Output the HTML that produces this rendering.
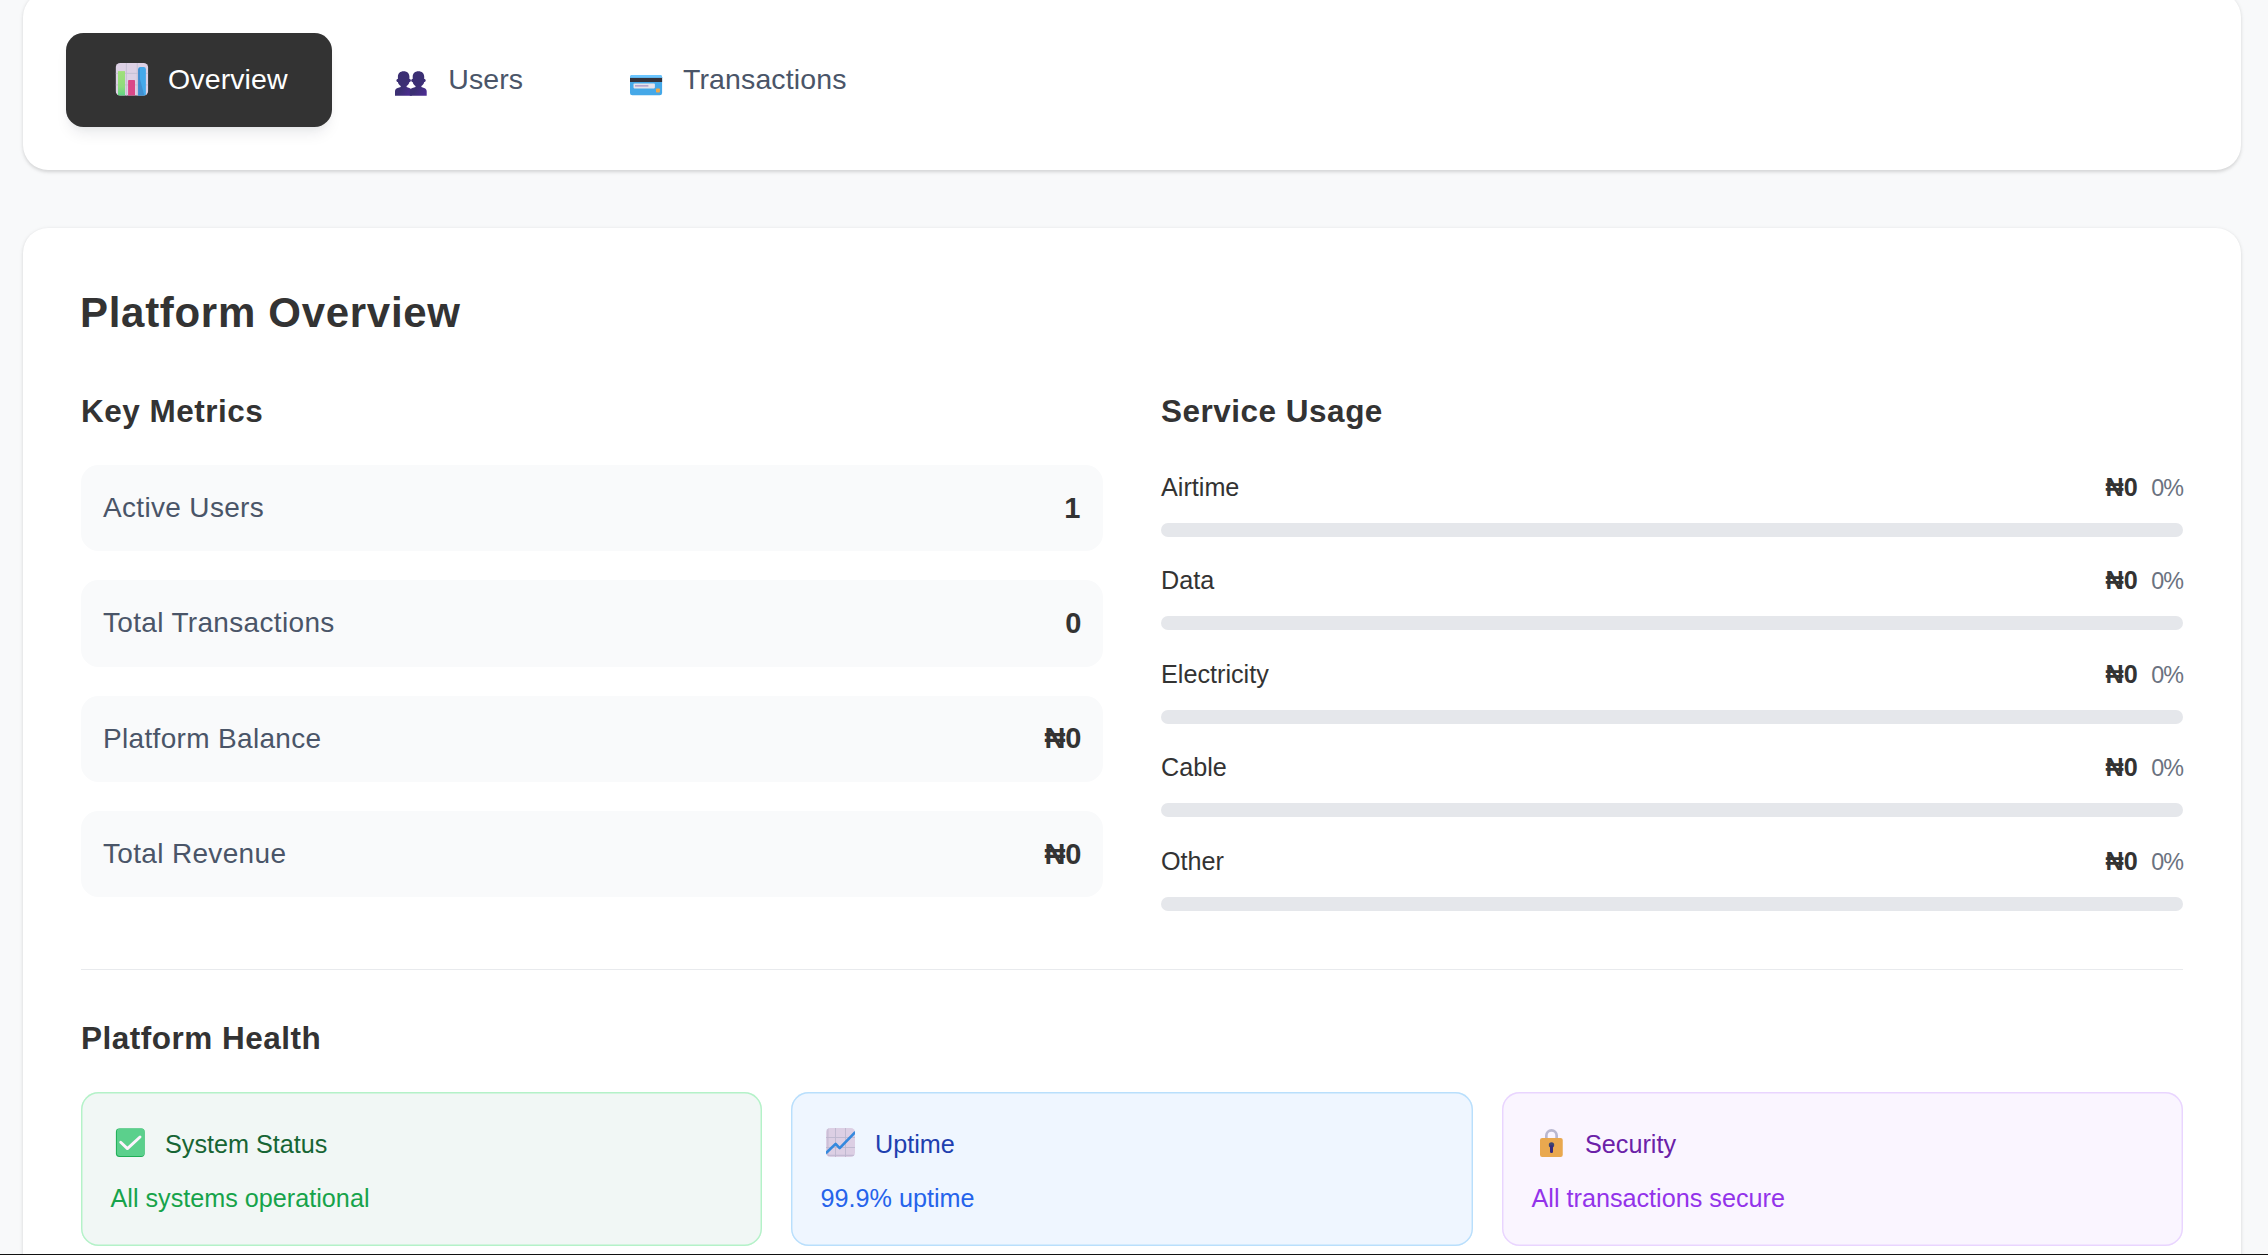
<!DOCTYPE html>
<html lang="en">
<head>
<meta charset="utf-8">
<title>Admin Dashboard - Platform Overview</title>
<style>
*{box-sizing:border-box;margin:0;padding:0}
html,body{width:2268px;height:1255px;overflow:hidden}
body{background:#f8f9fa;font-family:"Liberation Sans",Arial,Helvetica,sans-serif;color:#333;position:relative;-webkit-font-smoothing:antialiased}
.card{position:absolute;left:23px;width:2218px;background:#fff;border-radius:25px;box-shadow:0 1.5px 4.5px rgba(0,0,0,.10),0 1.5px 3px rgba(0,0,0,.06)}
/* ---------- tabs ---------- */
.tabs{top:-8px;height:178px}
.tabs ul{list-style:none;position:absolute;left:43px;top:41px;display:flex;height:94px}
.tab{display:flex;align-items:center;height:94px;border-radius:17.5px;font-size:28.5px;letter-spacing:.12px;color:#4a5568;white-space:nowrap;position:relative}
.tab svg{display:block;flex:none}
.tab span{display:block;line-height:93px;height:94px}
.tab.active{background:#333;color:#fff;box-shadow:0 10px 15px -4px rgba(15,23,42,.085),0 4px 7px -3px rgba(15,23,42,.05)}
/* ---------- main ---------- */
.main{top:228px;height:1100px}
h2{position:absolute;left:57px;top:56px;font-size:42px;letter-spacing:.7px;line-height:58px;font-weight:700;color:#333;white-space:nowrap}
h3{font-size:31.5px;letter-spacing:.5px;line-height:44px;position:relative;top:1px;font-weight:700;color:#333;white-space:nowrap}
.col{position:absolute;top:160px;width:1022px}
.metrics{left:58px}
.usage{left:1138px}
.mrow{height:86.2px;margin-bottom:29.13px;background:#f9fafb;border-radius:17.5px;padding:0 21.5px 0 22px;display:flex;justify-content:space-between;align-items:center;font-size:28px;letter-spacing:.33px;color:#4a5568}
.mrow b{font-size:29px;letter-spacing:0;color:#333;font-weight:700}
.metrics h3,.usage h3{margin-bottom:33px}
.srow{height:93.45px}
.srow .top{display:flex;justify-content:space-between;align-items:baseline;font-size:25.2px;color:#333;height:46px;line-height:44px}
.srow .top b{font-weight:700;font-size:25.2px;color:#333}
.srow .top i{font-style:normal;font-size:23.3px;letter-spacing:-.75px;color:#6b7280;margin-left:13.4px;margin-right:-.3px}
.bar{height:14px;border-radius:7px;background:#e5e7eb;margin-top:12px}
hr{position:absolute;left:58px;width:2102px;top:740.5px;border:0;height:1.5px;background:#e8eaed}
.health{position:absolute;left:58px;top:787px;width:2102px}
.hcards{display:flex;margin-top:33px}
.hc{flex:none;width:681px;height:153.5px;border-radius:17.5px;position:relative}
.hc.b{margin-left:29px;width:681.5px}.hc.p{margin-left:29.5px}
.hc .t{position:absolute;left:34px;top:36px;height:30px;display:flex;align-items:center;font-size:25.2px;line-height:30px;white-space:nowrap}
.hc .t svg{display:block;flex:none;margin-right:20px}
.hc .t span{position:relative;top:.5px}
.hc .s{position:absolute;left:29.5px;top:90.5px;font-size:25.2px;line-height:30px;white-space:nowrap}
.hc.g{background:#f1f7f5;box-shadow:inset 0 0 0 1.45px #b4f2c8}.hc.g .t{color:#166534}.hc.g .s{color:#16a34a}
.hc.b{background:#eff6ff;box-shadow:inset 0 0 0 1.45px #b9dffc}.hc.b .t{color:#1e40af}.hc.b .s{color:#2563eb}
.hc.p{background:#faf5ff;box-shadow:inset 0 0 0 1.45px #e9d5ff}.hc.p .t{color:#6b21a8}.hc.p .s{color:#9333ea}
.bottomline{position:absolute;left:0;top:1253.5px;width:2268px;height:2px;background:#111}
</style>
</head>
<body>

<nav class="card tabs">
  <ul>
    <li class="tab active" style="width:266px;padding-left:49px">
      <svg width="34" height="34" viewBox="0 0 34 34" style="margin-right:19px;position:relative;top:-1px">
        <defs><clipPath id="cpa"><rect x="0.15" y="0.4" width="32.5" height="32.7" rx="4.6"/></clipPath>
        <linearGradient id="gga" x1="0" y1="0" x2="0" y2="1"><stop offset="0" stop-color="#a0e07a"/><stop offset=".6" stop-color="#8fdc7c"/><stop offset="1" stop-color="#58d286"/></linearGradient></defs>
        <g transform="translate(.5 .5)" clip-path="url(#cpa)">
          <rect width="33" height="34" fill="#ddd1e5"/>
          <path d="M10.9 0V34M21.75 0V34M0 10.9H33M0 22.4H33" stroke="#c3bfd4" stroke-width=".9" fill="none"/>
          <rect x="2.5" y="8.6" width="7" height="26" fill="url(#gga)"/>
          <rect x="12.6" y="17.5" width="6.9" height="17" rx=".8" fill="#d94888"/>
          <rect x="22.7" y="4.6" width="7.7" height="30" rx="2.2" fill="#45a9ea"/>
          <path d="M22.7 7.5q0-2 1.6-2.6V34H22.7z" fill="#3f8acc"/>
          <path d="M24.3 16l4.8 18h-4.8z" fill="#3f8acc" opacity=".8"/>
        </g></svg>
      <span>Overview</span>
    </li>
    <li class="tab" style="margin-left:11px;width:224px;padding-left:52px">
      <svg width="32" height="26" viewBox="0 0 32 26" style="margin-right:21.2px;position:relative;top:4px">
        <defs><linearGradient id="ggu" x1="0" y1="0" x2="1" y2="1"><stop offset="0" stop-color="#3b2f73"/><stop offset=".55" stop-color="#3b2f73"/><stop offset="1" stop-color="#4f2c98"/></linearGradient></defs>
        <g fill="url(#ggu)">
          <path d="M8.65.2C12.2.2 14.4 2.4 14.4 5.6V8c.9 0 1.5.6 1.5 1.4s-.6 1.500-1.500 1.500C14.200 12.600 13 14 11.600 14.900V16L14.300 16.900C15.900 17.400 16.900 18.800 16.900 20.400V24.800H0V20.400C0 18.800 1 17.400 2.600 16.900L5.700 16V14.900C4.300 14 3.100 12.600 2.900 10.900c-.9 0-1.500-.7-1.500-1.500S2 8 2.900 8V5.600C2.900 2.400 5.100.2 8.650.2z"/>
          <path transform="translate(14.8 0)" d="M8.65.2C12.2.2 14.4 2.4 14.4 5.6V8c.9 0 1.5.6 1.5 1.4s-.6 1.500-1.500 1.500C14.200 12.600 13 14 11.600 14.900V16L14.300 16.900C15.900 17.400 16.900 18.800 16.900 20.400V24.800H0V20.400C0 18.800 1 17.400 2.600 16.900L5.700 16V14.900C4.300 14 3.100 12.600 2.900 10.900c-.9 0-1.500-.7-1.500-1.500S2 8 2.900 8V5.600C2.900 2.400 5.100.2 8.650.2z"/>
        </g></svg>
      <span>Users</span>
    </li>
    <li class="tab" style="margin-left:11px;width:312px;padding-left:52px">
      <svg width="33" height="22" viewBox="0 0 33 22" style="margin-right:20px;position:relative;top:5px">
        <defs><clipPath id="cpc"><rect x="0" y="0.4" width="32.1" height="20.4" rx="2.4"/></clipPath></defs>
        <g transform="translate(0 .5)" clip-path="url(#cpc)">
          <rect width="33" height="22" fill="#45a8e8"/>
          <rect width="33" height="3.4" fill="#6cc6ff"/>
          <rect y="3.4" width="33" height="4.1" fill="#35323a"/>
          <rect x="3.5" y="9.1" width="21.4" height="4.8" rx=".8" fill="#e7e3ea"/>
          <path d="M5 11.4H18.4" stroke="#a28fc3" stroke-width="1.1"/>
          <rect x="26" y="14" width="3.9" height="4" rx=".8" fill="#f0a848"/>
        </g></svg>
      <span>Transactions</span>
    </li>
  </ul>
</nav>

<main class="card main">
  <h2>Platform Overview</h2>

  <section class="col metrics">
    <h3>Key Metrics</h3>
    <div class="mrow"><span>Active Users</span><b style="margin-right:1.2px">1</b></div>
    <div class="mrow"><span>Total Transactions</span><b>0</b></div>
    <div class="mrow"><span>Platform Balance</span><b>₦0</b></div>
    <div class="mrow"><span>Total Revenue</span><b>₦0</b></div>
  </section>

  <section class="col usage">
    <h3>Service Usage</h3>
    <div class="srow"><div class="top"><span>Airtime</span><span><b>₦0</b><i>0%</i></span></div><div class="bar"></div></div>
    <div class="srow"><div class="top"><span>Data</span><span><b>₦0</b><i>0%</i></span></div><div class="bar"></div></div>
    <div class="srow"><div class="top"><span>Electricity</span><span><b>₦0</b><i>0%</i></span></div><div class="bar"></div></div>
    <div class="srow"><div class="top"><span>Cable</span><span><b>₦0</b><i>0%</i></span></div><div class="bar"></div></div>
    <div class="srow"><div class="top"><span>Other</span><span><b>₦0</b><i>0%</i></span></div><div class="bar"></div></div>
  </section>

  <hr>

  <section class="health">
    <h3>Platform Health</h3>
    <div class="hcards">
      <div class="hc g">
        <div class="t"><svg width="30" height="30" viewBox="0 0 30 30"><g transform="translate(.9 .4)">
          <rect x="0" y="0.2" width="28.7" height="28.4" rx="3.4" fill="#1fae56"/>
          <rect x="1" y="0.2" width="27.7" height="27.3" rx="3" fill="#5bd08c"/>
          <path d="M4.8 13.9l6.7 6.3L24.1 8.6" fill="none" stroke="#fdf3fd" stroke-width="2.9" stroke-linecap="round" stroke-linejoin="round"/></g></svg><span>System Status</span></div>
        <div class="s">All systems operational</div>
      </div>
      <div class="hc b">
        <div class="t"><svg width="30" height="30" viewBox="0 0 30 30">
          <defs><clipPath id="cpu"><rect width="29" height="29" rx="4.2"/></clipPath></defs>
          <g transform="translate(1 0)" clip-path="url(#cpu)">
            <rect width="29" height="29" fill="#dccfe4"/>
            <path d="M9.5 0V29M19.5 0V29M0 9.5H29M0 19.5H29" stroke="#bcb8ce" stroke-width=".9" fill="none"/>
            <path d="M1.9 0V27.3H29" stroke="#bfb6cf" stroke-width="1" fill="none"/>
            <path d="M-.5 25.6L9.6 15.9l4.1 4.2L29.5 3.9" fill="none" stroke="#3589de" stroke-width="2.7" stroke-linejoin="round"/>
          </g></svg><span>Uptime</span></div>
        <div class="s">99.9% uptime</div>
      </div>
      <div class="hc p">
        <div class="t"><svg width="30" height="30" viewBox="0 0 30 30" style="margin-right:19px"><g transform="translate(3.5 .5)">
          <path d="M6.85 11V7.1a5.15 5.15 0 0 1 10.3 0V11" fill="none" stroke="#b9b8d1" stroke-width="2.7"/>
          <rect x="0.5" y="9.4" width="22.75" height="19.1" rx="2.2" fill="#e9a84f"/>
          <circle cx="12" cy="16.4" r="2.7" fill="#3e4470"/>
          <rect x="10.5" y="16.8" width="3" height="7.6" rx="1.2" fill="#36297c"/></g></svg><span>Security</span></div>
        <div class="s">All transactions secure</div>
      </div>
    </div>
  </section>
</main>

<div class="bottomline"></div>
</body>
</html>
